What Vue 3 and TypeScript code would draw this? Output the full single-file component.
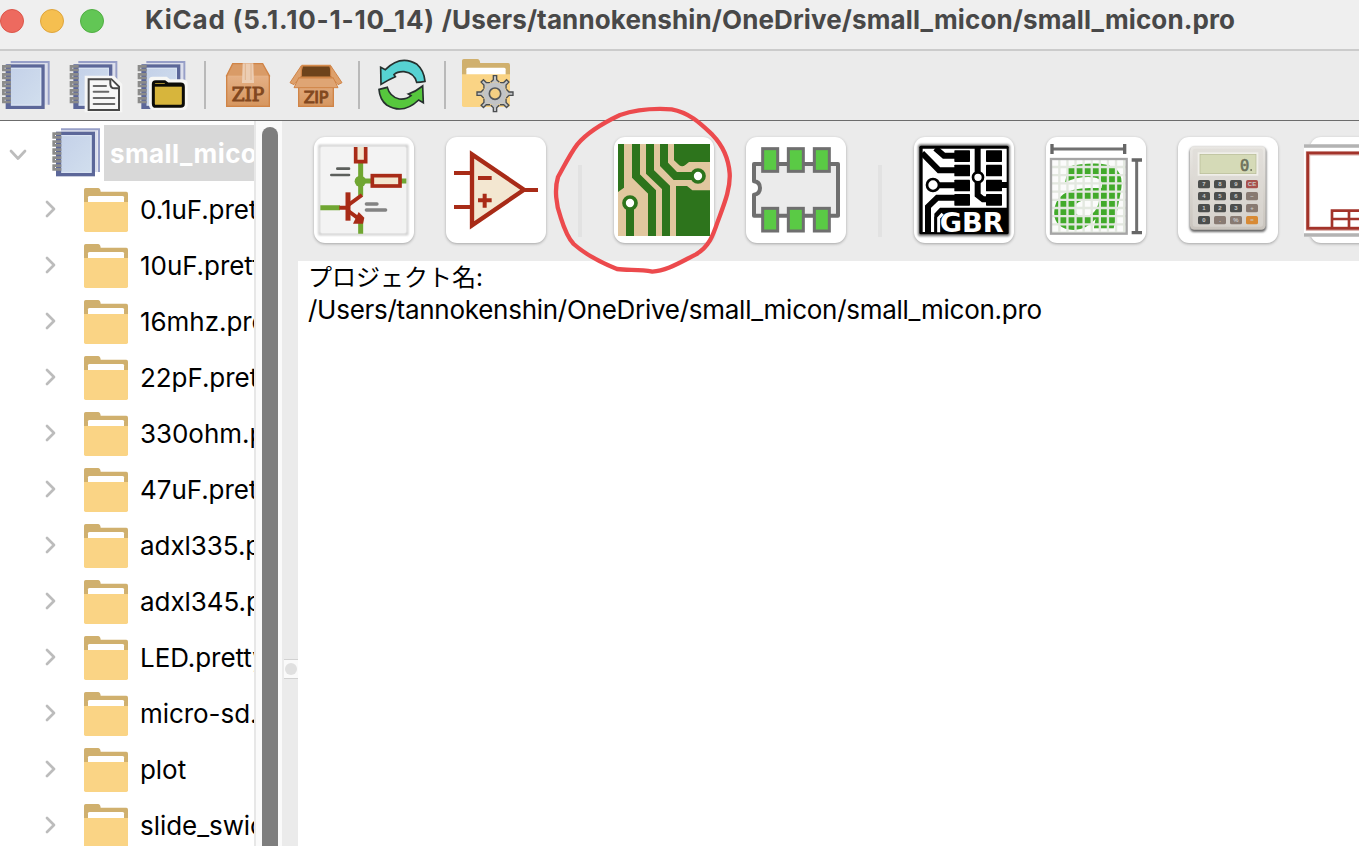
<script setup lang="ts">
const folders: string[] = [
  '0.1uF.pretty', '10uF.pretty', '16mhz.pretty', '22pF.pretty', '330ohm.pretty', '47uF.pretty',
  'adxl335.pretty', 'adxl345.pretty', 'LED.pretty', 'micro-sd.pretty', 'plot', 'slide_swich.pretty',
]
const rings: number[] = [0, 1, 2, 3, 4]
const grid: number[] = [0, 1, 2, 3, 4, 5, 6, 7, 8]
const keyRows: string[][] = [
  ['7', '8', '9', 'CE'],
  ['4', '5', '6', '–'],
  ['1', '2', '3', '+'],
  ['0', '.', '%', '='],
]
function keyColor(r: number, c: number): string {
  if (r === 0 && c === 3) return '#a8504c'
  if (r === 3 && c === 3) return '#d88a35'
  if (c === 3 || (r === 3 && c > 0)) return '#887a72'
  return '#4c4e4d'
}
const teeth: number[] = [0, 45, 90, 135, 180, 225, 270, 315]
</script>

<template>
  <div class="window">
    <svg width="0" height="0" class="defs">
      <defs>
        <linearGradient id="page" x1="0" y1="0" x2="1" y2="1">
          <stop offset="0" stop-color="#c3d0e8" /><stop offset="1" stop-color="#d2dfee" />
        </linearGradient>
        <linearGradient id="box" x1="0" y1="0" x2="0" y2="1">
          <stop offset="0" stop-color="#e5b085" /><stop offset="1" stop-color="#d6965f" />
        </linearGradient>
        <linearGradient id="calc" x1="0" y1="0" x2="0" y2="1">
          <stop offset="0" stop-color="#e9e7e3" /><stop offset="1" stop-color="#c9c4bd" />
        </linearGradient>
        <filter id="soft" x="-20%" y="-20%" width="140%" height="140%"><feGaussianBlur stdDeviation="3" /></filter>
        <symbol id="notebook" viewBox="0 0 150 156" overflow="visible">
          <path d="M27 10H137V135H125V14H27Z" fill="#dcdfec" />
          <path d="M27 7H141V135" fill="none" stroke="#979fc8" stroke-width="6" />
          <rect x="17" y="19" width="107" height="124" fill="url(#page)" stroke="#5c6799" stroke-width="10" />
          <rect x="25" y="26" width="92" height="110" fill="none" stroke="#dce5f3" stroke-width="3" />
          <path d="M21 15V146" stroke="#5c6799" stroke-width="13" />
          <g v-for="i in rings" :key="i">
            <path :d="`M28 ${20 + i * 24}H5V${31 + i * 24}H28`" fill="none" stroke="#8b8b8a" stroke-width="8" />
          </g>
        </symbol>
        <symbol id="folder" viewBox="0 0 132 132">
          <path d="M0 125V5Q0 0 5 0H42Q49 0 50 11H127Q132 11 132 17V60H0Z" fill="#d0b06e" />
          <path d="M12 50V28Q12 24 17 24H115Q120 24 120 28V50Z" fill="#fff" />
          <path d="M0 42H132V127Q132 132 127 132H5Q0 132 0 127Z" fill="#fad485" />
        </symbol>
      </defs>
    </svg>

    <header class="titlebar">
      <div class="lights"><i class="red"></i><i class="yellow"></i><i class="green"></i></div>
      <span class="title"><span class="version">KiCad (5.1.10-1-10_14) </span>/Users/tannokenshin/OneDrive/small_micon/small_micon.pro</span>
    </header>

    <nav class="toolbar">
      <svg class="tool" viewBox="-24 153 204 207"><use href="#notebook" x="5" y="179" width="150" height="156" /></svg>
      <svg class="tool" viewBox="180 153 204 207">
        <use href="#notebook" x="208" y="179" width="150" height="156" />
        <path d="M254 227H342L367 252V337H254Z" fill="#f6f6f5" />
        <path d="M266 238H334L357 260V330H266Z" fill="#f7f7f7" stroke="#484848" stroke-width="6" />
        <path d="M331 238V251Q331 265 344 265H357" fill="#fff" stroke="#484848" stroke-width="6" />
        <path d="M281 258H318M281 275H325M281 294H343M281 312H343" stroke="#686868" stroke-width="6" stroke-linecap="round" />
      </svg>
      <svg class="tool" viewBox="384 153 204 207">
        <use href="#notebook" x="412" y="179" width="150" height="156" />
        <path d="M447 239Q447 230 458 230H500L510 238H548Q563 240 563 252V316Q561 330 549 330H462Q448 330 447 316Z" fill="#f7f7f5" />
        <path d="M460 252Q460 245 467 245H494L503 252H542Q550 252 550 260V312Q550 319 542 319H468Q460 319 460 311Z" fill="#d7b53c" stroke="#0c0c08" stroke-width="9" />
        <path d="M462 256H548" stroke="#0c0c08" stroke-width="8" />
      </svg>
      <i class="divider"></i>
      <svg class="tool" viewBox="42 3 204 207">
        <path d="M98 41H188L208 77H80Z" fill="#d99b67" stroke="#d08447" stroke-width="4" />
        <rect x="80" y="77" width="128" height="92" fill="url(#box)" stroke="#d08447" stroke-width="4" />
        <path d="M83 78H205" stroke="#edc29d" stroke-width="3" />
        <path d="M128 40H160L162 99H126Z" fill="#eccdb3" /><path d="M136 40V90M153 40V90" stroke="#dfb48e" stroke-width="3" />
        <text x="144" y="152" class="zip slab" font-size="56" textLength="98" lengthAdjust="spacingAndGlyphs">ZIP</text>
      </svg>
      <svg class="tool" viewBox="246 3 204 207">
        <path d="M307 47H390L399 82H298Z" fill="#6e431b" stroke="#d58b4d" stroke-width="5" />
        <path d="M304 47L270 98L282 104L304 78ZM392 47L426 98L414 104L392 78Z" fill="#dea16c" stroke="#d08447" stroke-width="3" />
        <rect x="296" y="85" width="104" height="84" fill="url(#box)" stroke="#d08447" stroke-width="4" />
        <path d="M296 84H400L414 113H282Z" fill="#dfa574" stroke="#d08447" stroke-width="3" />
        <text x="348" y="158" class="zip sans" font-size="48" textLength="74" lengthAdjust="spacing">ZIP</text>
      </svg>
      <i class="divider"></i>
      <svg class="tool" viewBox="504 3 204 207">
        <g stroke="#26302e" stroke-width="5" stroke-linejoin="miter">
          <path d="M542 52L556 59Q602 13 651 43Q672 61 675 94Q661 97 650 97Q643 69 612 65Q592 64 582 74L586 80Q565 89 543 103Z" fill="#56d2d2" />
          <path d="M670 158L656 150Q609 195 560 165Q539 148 537 118L562 112Q569 140 598 147Q619 149 633 137L625 132Q647 125 668 108Z" fill="#56c73d" />
        </g>
      </svg>
      <i class="divider"></i>
      <svg class="tool" viewBox="762 3 204 207">
        <use href="#folder" x="786" y="27" width="144" height="144" />
        <g transform="translate(885 131)">
          <g fill="#c2c4c6" stroke="#4b4e50" stroke-width="4">
            <path v-for="t in teeth" :key="t" d="M-13 -34L-5 -42V-54H5V-42L13 -34" :transform="`rotate(${t})`" />
          </g>
          <circle r="34" fill="#c2c4c6" />
          <circle r="17" fill="#f4cf83" stroke="#54575a" stroke-width="5" />
        </g>
      </svg>
    </nav>

    <main class="body">
      <aside class="sidebar">
        <div class="tree">
          <div class="row root">
            <svg class="chev-down" viewBox="0 0 18 12"><path d="M2 2L9 9.5L16 2" /></svg>
            <svg class="book" viewBox="0 0 150 156"><use href="#notebook" width="150" height="156" /></svg>
            <span class="selected">small_micon</span>
          </div>
          <div v-for="f in folders" :key="f" class="row">
            <svg class="chev" viewBox="0 0 12 18"><path d="M2 2L9 9L2 16" /></svg>
            <svg class="folder" viewBox="0 0 132 132"><use href="#folder" width="132" height="132" /></svg>
            <span class="name">{{ f }}</span>
          </div>
        </div>
        <div class="track"><div class="thumb"></div></div>
      </aside>

      <section class="right">
        <div class="launcher">
          <div class="app">
            <svg viewBox="27 36 300 318">
              <rect x="43" y="62" width="264" height="266" fill="none" stroke="#bdbdbd" stroke-width="5" filter="url(#soft)" />
              <rect x="48" y="67" width="254" height="256" fill="#f3f3f3" />
              <path d="M167 112V212M167 285V326M46 248H105M160 168H304" stroke="#70a632" stroke-width="15" />
              <circle cx="166" cy="169" r="17" fill="#70a632" />
              <g fill="#f3e6cf" stroke="#a82b17" stroke-width="11">
                <path d="M152 66V110H182V66" /><rect x="202" y="152" width="83" height="31" />
              </g>
              <path d="M129 202V287" stroke="#a82b17" stroke-width="15" />
              <path d="M103 248H130M130 240L171 210M130 258L165 284" stroke="#a82b17" stroke-width="12" fill="none" />
              <path d="M161 261L178 278L174 296H144Z" fill="#a82b17" />
              <path d="M97 131H132M79 150H132" stroke="#5c5f5c" stroke-width="8" stroke-linecap="round" />
              <path d="M184 237H216M184 255H242" stroke="#838383" stroke-width="10" stroke-linecap="round" />
            </svg>
          </div>
          <div class="app">
            <svg viewBox="423 36 300 318">
              <path d="M501 88V301L657 194Z" fill="#f3e7d1" stroke="#a82b17" stroke-width="13" />
              <path d="M447 144H500M447 246H500M655 195H699M519 159H560M519 226H560M539 206V248" stroke="#a82b17" stroke-width="12" />
            </svg>
          </div>
          <i class="sep"></i>
          <div class="app">
            <svg viewBox="222 126 300 318">
              <rect x="234" y="147" width="276" height="276" fill="#e1c79f" />
              <path d="M234 147H252V278L234 291ZM402 147H510V201H447L436 210Q427 217 418 211L402 196ZM408 273H441L457 286H510V423H408Z" fill="#2d741c" />
              <path d="M288 147V243L336 291V423M330 147V231L378 277V423M372 147V208L406 243H465M270 335V423" fill="none" stroke="#2d741c" stroke-width="24" />
              <g fill="#fff" stroke="#2d741c" stroke-width="11"><circle cx="474" cy="243" r="18" /><circle cx="270" cy="324" r="18" /></g>
            </svg>
          </div>
          <div class="app">
            <svg viewBox="33 36 300 318">
              <path d="M57 117H309V272H57V209Q75 207 75 189Q75 171 57 169Z" fill="#ebebeb" stroke="#6f6f6f" stroke-width="12" stroke-linejoin="round" />
              <g fill="#5aca45" stroke="#6f6f6f" stroke-width="9">
                <rect v-for="x in [83, 160, 238]" :key="x" :x="x" y="71" width="45" height="68" />
                <rect v-for="x in [83, 160, 238]" :key="x + 500" :x="x" y="250" width="45" height="68" />
              </g>
            </svg>
          </div>
          <i class="sep"></i>
          <div class="app">
            <svg viewBox="42 36 300 318">
              <rect x="54" y="58" width="276" height="276" rx="8" fill="#777" filter="url(#soft)" />
              <rect x="58" y="62" width="268" height="266" rx="5" fill="#000" />
              <path d="M68 71H320V248H120L103 266V321H68Z" fill="#fff" />
              <g fill="none" stroke="#000" stroke-width="18">
                <path d="M66 84L117 136H170M106 70L132 92H170M112 181H170M84 325V245L112 218H170M233 68V210L249 223H265M300 180H324" />
              </g>
              <g>
                <rect v-for="y in [76, 119, 164, 207]" :key="y" x="163" :y="y" width="47" height="35" rx="2" />
                <rect v-for="y in [76, 119, 164, 207]" :key="y + 500" x="258" :y="y" width="48" height="35" rx="2" />
              </g>
              <g fill="#fff" stroke="#000" stroke-width="8"><circle cx="99" cy="180" r="18" /><circle cx="234" cy="157" r="15" /></g>
              <path d="M103 324V276L128 254H324V324Z" fill="#000" />
              <path d="M116 322V279L128 266" stroke="#fff" stroke-width="9" fill="none" />
              <text x="215" y="320" class="gbr" font-size="78" textLength="192" lengthAdjust="spacingAndGlyphs">GBR</text>
            </svg>
          </div>
          <div class="app">
            <svg viewBox="48 36 300 318">
              <path d="M64 72H286M320 105V323" stroke="#707070" stroke-width="9" />
              <path d="M66 57V87M284 57V87M305 105H336M305 323H336" stroke="#666" stroke-width="10" />
              <rect x="63" y="102" width="227" height="224" fill="#fbfbfb" />
              <text x="182" y="309" class="glyph" font-size="346" textLength="230" lengthAdjust="spacingAndGlyphs">a</text>
              <g stroke="#e3e8e0" stroke-width="7">
                <path v-for="i in grid" :key="i" :d="`M${88 + i * 24.3} 102V326M63 ${126 + i * 24.6}H290`" />
              </g>
              <rect x="63" y="102" width="227" height="224" fill="none" stroke="#a5a5a5" stroke-width="7" />
            </svg>
          </div>
          <div class="app">
            <svg viewBox="39 36 300 318">
              <rect x="74" y="67" width="230" height="254" rx="14" fill="#666" filter="url(#soft)" />
              <rect x="75" y="64" width="227" height="250" rx="13" fill="url(#calc)" />
              <rect x="83" y="71" width="211" height="234" rx="8" fill="#dedbd6" opacity=".6" />
              <rect x="98" y="82" width="182" height="70" fill="#f0efe9" />
              <rect x="105" y="88" width="168" height="58" fill="#d5dab7" stroke="#b5b994" stroke-width="2" />
              <text x="239" y="137" class="digit" font-size="46">0</text><rect x="256" y="132" width="5" height="6" fill="#7c8068" />
              <g v-for="(row, r) in keyRows" :key="r">
                <g v-for="(k, c) in row" :key="c">
                  <rect :x="99 + c * 48" :y="165 + r * 36" width="36" height="25" rx="5" :fill="keyColor(r, c)" />
                  <text :x="117 + c * 48" :y="184 + r * 36" class="key" font-size="18">{{ k }}</text>
                </g>
              </g>
            </svg>
          </div>
          <div class="app">
            <svg viewBox="435 36 300 318">
              <rect x="417" y="58" width="330" height="278" fill="#fff" />
              <path d="M417 63H740M417 330H740" stroke="#b3b3b3" stroke-width="10" />
              <rect x="429" y="85" width="310" height="226" fill="#fff" stroke="#d8aaa5" stroke-width="13" />
              <rect x="428" y="84" width="310" height="226" fill="none" stroke="#a3332a" stroke-width="8" />
              <path d="M501 310V257H740M501 282H740M552 257V310" fill="none" stroke="#a3332a" stroke-width="8" />
            </svg>
          </div>
        </div>
        <div class="lower">
          <div class="sash"><div class="grip"><i></i></div></div>
          <div class="info">
            <p class="jp">プロジェクト名:</p>
            <p class="path">/Users/tannokenshin/OneDrive/small_micon/small_micon.pro</p>
          </div>
        </div>
      </section>
    </main>

    <svg class="annotation" viewBox="0 0 600 555">
      <path d="M395 43C350 40 290 43 240 60C185 86 137 118 112 148C91 175 72 214 54 246C43 282 48 330 62 367C72 399 84 429 101 447C136 478 184 503 231 522C262 527 296 522 337 530C378 528 415 505 468 478C507 455 519 422 533 380C552 328 572 281 569 235C566 195 552 155 517 119C484 88 450 53 395 43Z" />
    </svg>
  </div>
</template>

<style>
body { margin: 0; overflow: hidden; }
</style>

<style scoped>
.window { position: relative; width: 1359px; height: 846px; overflow: hidden; display: flex; flex-direction: column; background: #fff; font-family: Inter, "Noto Sans CJK JP", sans-serif; }
.defs { position: absolute; }
.titlebar { flex: none; height: 49px; display: flex; background: #efefef; border-bottom: 2px solid #cbcbcb; }
.lights { display: flex; gap: 16px; padding-top: 9px; width: 145px; flex: none; }
.lights i { width: 24px; height: 24px; border-radius: 50%; box-sizing: border-box; border: 1px solid; }
.red { background: #ed6a5f; border-color: #dc5549 !important; }
.yellow { background: #f5bf50; border-color: #dfa53c !important; }
.green { background: #62c655; border-color: #50ae42 !important; }
.title { font-weight: 700; font-size: 26px; line-height: 40px; color: #484848; white-space: nowrap; letter-spacing: 0.12px; }
.version { letter-spacing: 0.79px; }
.toolbar { flex: none; height: 69px; display: flex; background: #ebebeb; border-bottom: 1px solid #6c6c6c; }
.tool { width: 68px; height: 69px; flex: none; }
.tool:first-child { margin-left: -8px; }
.divider { width: 2px; height: 48px; margin: 10px 8px 0; background: #b9b9b9; }
.zip { font-weight: 400; fill: #82481f; stroke: #82481f; stroke-width: 3; text-anchor: middle; }
.zip.slab { font-family: "DejaVu Serif", serif; }
.zip.sans { font-family: "DejaVu Sans", sans-serif; }
.body { flex: 1; display: flex; min-height: 0; }
.sidebar { width: 282px; flex: none; display: flex; }
.tree { width: 254px; overflow: hidden; padding-top: 4px; box-sizing: border-box; }
.row { height: 56px; display: flex; align-items: center; white-space: nowrap; }
.row svg { flex: none; overflow: visible; }
.row path { stroke-linejoin: round; }
.chev path, .chev-down path { fill: none; stroke: #bcbcbc; stroke-width: 2.7; stroke-linecap: round; }
.chev-down { width: 18px; height: 12px; margin: 3px 25px 0 9px; }
.chev { width: 12px; height: 18px; margin: 0 27px 0 45px; }
.book { width: 50px; height: 52px; margin: 0 2px 0 0; }
.folder { width: 44px; height: 44px; margin-top: 1px; }
.selected { height: 56px; flex: 1; line-height: 58px; background: #d8d8d8; color: #fff; font-size: 26px; font-weight: 700; padding-left: 6px; letter-spacing: 0.4px; }
.name { font-size: 26px; line-height: 56px; margin: 2px 0 0 12px; color: #000; letter-spacing: -0.05px; }
.track { width: 28px; box-sizing: border-box; border-left: 2px solid #e7e7e7; background: #fafafa; padding: 6px 4px 0 6px; }
.thumb { width: 16px; height: 740px; border-radius: 8px; background: #7e7e7e; }
.right { flex: 1; min-width: 0; display: flex; flex-direction: column; }
.launcher { height: 140px; flex: none; background: #ebebeb; display: flex; gap: 32px; padding: 16px 0 0 32px; box-sizing: border-box; overflow: hidden; }
.app { width: 100px; height: 106px; flex: none; border-radius: 11px; background: #fff; box-shadow: 0 1px 3px rgba(0, 0, 0, .3); }
.app svg { display: block; width: 100px; height: 106px; overflow: visible; }
.sep { flex: none; width: 4px; height: 72px; margin-top: 28px; background: #e2e2e2; }
.gbr { font-family: "DejaVu Sans", sans-serif; font-weight: 700; fill: #fff; text-anchor: middle; }
.glyph { font-family: "DejaVu Sans", sans-serif; font-style: italic; font-weight: 700; fill: #42aa2b; text-anchor: middle; }
.digit { font-family: "DejaVu Sans Mono", monospace; fill: #6d725c; stroke: #6d725c; stroke-width: 2; text-anchor: middle; }
.key { font-family: "Liberation Sans", sans-serif; font-weight: 700; fill: #c9c9c7; text-anchor: middle; }
.lower { flex: 1; display: flex; min-height: 0; }
.sash { width: 16px; flex: none; background: #ebebeb; padding-top: 398px; box-sizing: border-box; }
.grip { height: 18px; margin-left: 2px; border-top: 1px solid #d2d2d2; border-bottom: 1px solid #d2d2d2; background: #fafafa; display: flex; align-items: center; justify-content: center; }
.grip i { width: 12px; height: 12px; border-radius: 50%; background: #e0e0e0; }
.info { padding: 1px 0 0 10px; font-size: 26px; line-height: 32px; white-space: nowrap; color: #000; }
.info p { margin: 0; }
.jp { font-size: 24px; }
.path { letter-spacing: -0.27px; }
.annotation { position: absolute; left: 540px; top: 95px; width: 200px; height: 185px; pointer-events: none; }
.annotation path { fill: none; stroke: #ec4a4d; stroke-width: 13; stroke-linejoin: round; }
</style>
